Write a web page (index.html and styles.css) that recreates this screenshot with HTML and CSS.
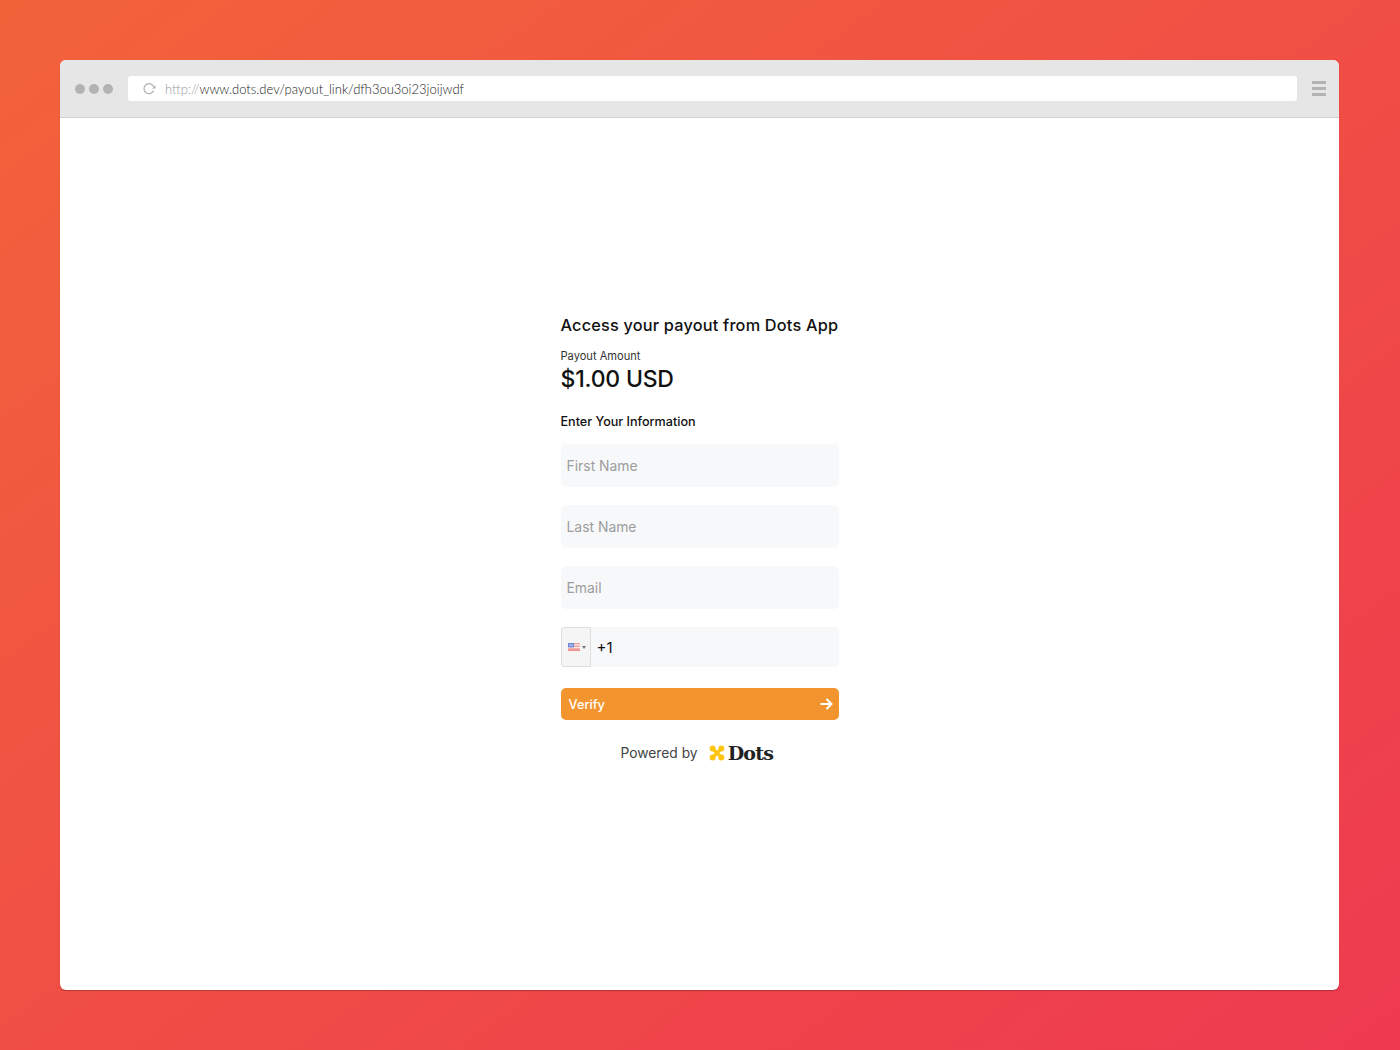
FILE: index.html
```html
<!DOCTYPE html>
<html>
<head>
    <title>Dots Payout</title>
    <link rel="stylesheet" href="styles.css">
</head>
<body>
    <div class="window">
        <div class="toolbar">
            <div class="dots">
                <span></span>
                <span></span>
                <span></span>
            </div>
            <div class="address">
                <svg class="reload" width="14" height="14" viewBox="0 0 14 14" fill="none">
                    <path d="M11.6 8.6A5 5 0 1 1 10.6 3.2L12 4.6" stroke="#b3b3b3" stroke-width="1.3"/>
                    <path d="M13.6 6.4H9.8L13.6 3.4Z" fill="#b3b3b3"/>
                </svg>
                <span class="url"><span class="protocol">http://</span>www.dots.dev/payout_link/dfh3ou3oi23joijwdf</span>
            </div>
            <div class="menu">
                <span></span>
                <span></span>
                <span></span>
            </div>
        </div>

        <div class="content">
            <div class="form">
                <h1>Access your payout from Dots App</h1>
                <div class="amount-label">Payout Amount</div>
                <div class="amount">$1.00 USD</div>
                <div class="section-label">Enter Your Information</div>

                <div class="field">First Name</div>
                <div class="field">Last Name</div>
                <div class="field">Email</div>

                <div class="phone">
                    <div class="flag-box">
                        <svg width="12" height="8" viewBox="0 0 12 8">
                            <rect width="12" height="8" fill="#f3a6a6"/>
                            <rect y="1.4" width="12" height="1.2" fill="#fbeaea"/>
                            <rect y="4" width="12" height="1.2" fill="#fbeaea"/>
                            <rect y="6.6" width="12" height="1.4" fill="#f08f8f"/>
                            <rect width="6" height="4.4" fill="#6f86d6"/>
                            <rect x="1" y="1.6" width="4" height="1" fill="#d5dcf5"/>
                        </svg>
                        <span class="caret"></span>
                    </div>
                    <span class="dial-code">+1</span>
                </div>

                <div class="verify">
                    <span>Verify</span>
                    <svg width="14" height="14" viewBox="0 0 14 14" fill="none">
                        <path d="M1.5 7H12M7.5 2L12.5 7L7.5 12" stroke="#fff" stroke-width="2"/>
                    </svg>
                </div>

                <div class="powered">
                    <span class="powered-text">Powered by</span>
                    <svg class="logo-mark" width="16" height="16" viewBox="0 0 16 16">
                        <circle cx="3.6" cy="3.6" r="3" fill="#fdc50f"/>
                        <circle cx="12.4" cy="3.6" r="3" fill="#fdc50f"/>
                        <circle cx="3.6" cy="12.4" r="3" fill="#fdc50f"/>
                        <circle cx="12.4" cy="12.4" r="3" fill="#fdc50f"/>
                        <path d="M3.6 3.6L12.4 12.4M12.4 3.6L3.6 12.4" stroke="#fdc50f" stroke-width="3.4"/>
                    </svg>
                    <span class="logo-text">Dots</span>
                </div>
            </div>
        </div>
    </div>
</body>
</html>
```

FILE: styles.css
```css
html, body {
    height: 100%;
}

body {
    margin: 0;
    box-sizing: border-box;
    height: 1050px;
    padding: 60px 61px 60px 60px;
    overflow: hidden;
    font-family: Inter, "Liberation Sans", sans-serif;
    background: linear-gradient(to bottom right, #f2633a 0%, #ee3a50 100%);
    color: #111;
}

.window {
    height: 930px;
    background-color: #fff;
    border-radius: 6px;
    overflow: hidden;
    box-shadow: 0 1px 1px rgba(0, 0, 0, 0.25);
}

.toolbar {
    display: flex;
    align-items: center;
    box-sizing: border-box;
    height: 58px;
    padding: 0 13px 0 15px;
    background-color: #e6e6e6;
    border-bottom: 1px solid #cfcfcf;
}

.dots {
    display: flex;
    gap: 4px;
    margin-right: 15px;
}

.dots span {
    width: 10px;
    height: 10px;
    border-radius: 50%;
    background-color: #b3b3b3;
}

.address {
    flex: 1;
    display: flex;
    align-items: center;
    height: 25px;
    padding-left: 14px;
    background-color: #fff;
    border-radius: 3px;
}

.reload {
    margin-right: 9px;
}

.url {
    font-family: Lato, "Liberation Sans", sans-serif;
    font-size: 13px;
    font-weight: 300;
    color: #222;
}

.protocol {
    color: #999;
}

.menu {
    display: flex;
    flex-direction: column;
    gap: 3px;
    margin-left: 15px;
}

.menu span {
    width: 14px;
    height: 3px;
    background-color: #b3b3b3;
}

.content {
    display: flex;
    justify-content: center;
    padding-top: 196px;
}

.form {
    width: 278px;
}

h1 {
    margin: 0;
    font-size: 16.3px;
    font-weight: 500;
    line-height: 22px;
    letter-spacing: 0.2px;
    white-space: nowrap;
}

.amount-label {
    margin-top: 13px;
    font-size: 11.1px;
    line-height: 14px;
    color: #333;
}

.amount {
    margin-top: 1px;
    font-size: 23px;
    font-weight: 500;
    line-height: 30px;
    letter-spacing: -0.2px;
}

.section-label {
    margin-top: 20px;
    margin-bottom: 14px;
    font-size: 12.6px;
    font-weight: 500;
    line-height: 16px;
}

.field {
    display: flex;
    align-items: center;
    height: 43px;
    margin-bottom: 18px;
    padding-left: 6px;
    background-color: #f7f8fa;
    border-radius: 5px;
    font-size: 13.9px;
    color: #9d9d9d;
}

.phone {
    display: flex;
    align-items: center;
    height: 40px;
    background-color: #f7f8fa;
    border-radius: 4px;
}

.flag-box {
    display: flex;
    align-items: center;
    gap: 2px;
    box-sizing: border-box;
    width: 30px;
    height: 40px;
    padding-left: 6px;
    background-color: #f5f5f5;
    border: 1px solid #dedede;
    border-radius: 3px 0 0 3px;
}

.caret {
    border-top: 3px solid #777;
    border-left: 2px solid transparent;
    border-right: 2px solid transparent;
}

.dial-code {
    margin-left: 6px;
    font-size: 15px;
}

.verify {
    display: flex;
    align-items: center;
    justify-content: space-between;
    box-sizing: border-box;
    height: 32px;
    margin-top: 21px;
    padding: 0 6px 0 8px;
    background-color: #f2952e;
    border-radius: 5px;
    font-size: 12.8px;
    font-weight: 500;
    color: #fff;
}

.powered {
    display: flex;
    align-items: center;
    margin-top: 23px;
    padding-left: 60px;
    height: 20px;
}

.powered-text {
    font-size: 13.8px;
    color: #444;
}

.logo-mark {
    margin-left: 11px;
    margin-right: 3px;
}

.logo-text {
    font-family: "DejaVu Serif", "Liberation Serif", serif;
    font-size: 19px;
    font-weight: 700;
    letter-spacing: -0.8px;
    color: #222;
}
```
